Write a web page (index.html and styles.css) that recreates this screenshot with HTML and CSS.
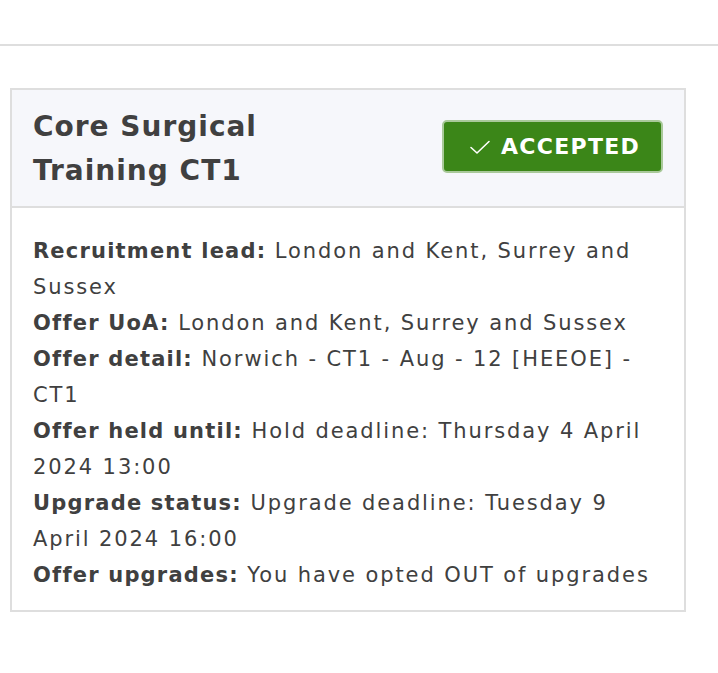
FILE: index.html
```html
<!DOCTYPE html>
<html lang="en">
<head>
<meta charset="utf-8">
<title>Offer</title>
<link rel="stylesheet" href="styles.css">
</head>
<body>
<div class="topbar"></div>
<div class="card">
  <div class="card-header">
    <h2 class="title">Core Surgical<br>Training CT1</h2>
    <div class="badge">
      <svg class="check" width="22" height="16" viewBox="0 0 22 16" aria-hidden="true"><path d="M2 8.5 L8 14 L20 2.5" fill="none" stroke="#fff" stroke-width="1.6" stroke-linecap="round" stroke-linejoin="round"/></svg>
      <span>ACCEPTED</span>
    </div>
  </div>
  <div class="card-body">
    <p><b>Recruitment lead:</b> London and Kent, Surrey and Sussex</p>
    <p><b>Offer UoA:</b> London and Kent, Surrey and Sussex</p>
    <p><b>Offer detail:</b> Norwich - CT1 - Aug - 12 [HEEOE] - CT1</p>
    <p><b>Offer held until:</b> Hold deadline: Thursday 4 April 2024 13:00</p>
    <p><b>Upgrade status:</b> Upgrade deadline: Tuesday 9 April 2024 16:00</p>
    <p><b>Offer upgrades:</b> You have opted OUT of upgrades</p>
  </div>
</div>
</body>
</html>
```
FILE: styles.css
```css
html, body {
  margin: 0;
  padding: 0;
  background: #fff;
}
body {
  font-family: "DejaVu Sans", Verdana, sans-serif;
  color: #404040;
}
.topbar {
  height: 44px;
  border-bottom: 2px solid #dedede;
}
.card {
  margin: 42px 0 0 10px;
  width: 672px;
  border: 2px solid #dedede;
}
.card-header {
  background: #f6f7fb;
  border-bottom: 2px solid #dedede;
  display: flex;
  justify-content: space-between;
  align-items: flex-start;
  padding: 15px 21px 13px 21px;
}
.title {
  margin: 0;
  font-size: 28px;
  line-height: 44px;
  font-weight: bold;
  letter-spacing: 1px;
  color: #404040;
}
.badge {
  display: flex;
  align-items: center;
  gap: 10px;
  box-sizing: border-box;
  width: 221px;
  height: 53px;
  margin-top: 15px;
  padding-left: 25px;
  background: #3b8618;
  border: 2px solid #a9c99a;
  border-radius: 5px;
  color: #fff;
  font-size: 22px;
  font-weight: bold;
  letter-spacing: 1.3px;
}
.check {
  flex: none;
}
.card-body {
  padding: 25px 21px 17px 21px;
  font-size: 21px;
  line-height: 36px;
  letter-spacing: 1.9px;
}
.card-body p {
  margin: 0;
}
.card-body b {
  font-weight: bold;
  letter-spacing: 1.2px;
}
```
